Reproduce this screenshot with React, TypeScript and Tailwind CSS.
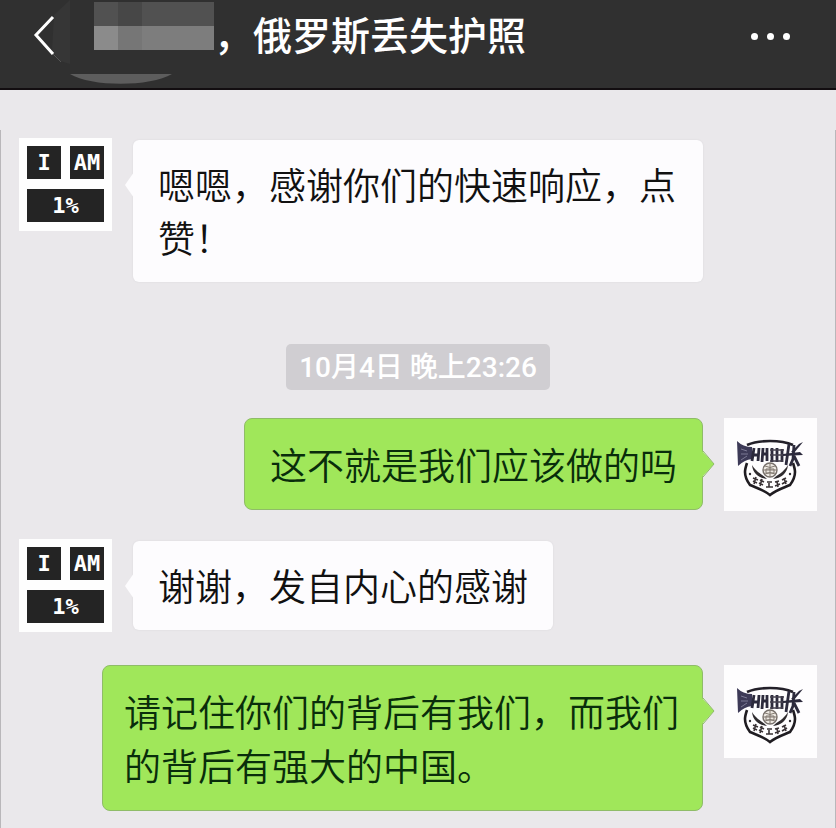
import type { ReactNode } from 'react';

function TileAvatar() {
  return (
    <div
      role="img"
      aria-label="I AM 1%"
      className="grid h-[93px] w-[93px] shrink-0 grid-cols-2 gap-x-[9px] gap-y-[10px] bg-[#fefefe] p-2 pb-[9px] font-['DejaVu_Sans_Mono',monospace] text-[22px] leading-none font-bold text-white"
    >
      <span className="flex items-center justify-center bg-[#242424]">I</span>
      <span className="flex items-center justify-center bg-[#242424]">AM</span>
      <span className="col-span-2 flex items-center justify-center bg-[#242424]">1%</span>
    </div>
  );
}

function BadgeAvatar() {
  return (
    <div className="h-[93px] w-[93px] shrink-0 bg-[#fefdfe]">
      <svg viewBox="0 0 93 93" className="h-full w-full" role="img" aria-label="警徽头像">
        <path d="M23 27Q32 23 46 23Q60 23 69 27" fill="none" stroke="#232029" strokeWidth="2.6" />
        <path d="M23 45C22 48 21 51 21 54C21 58 23 63 26 67C33 70 40 72 46 77C52 72 59 70 66 67C69 63 71 58 71 54C71 51 70 48 69 45" fill="none" stroke="#1f1c21" strokeWidth="2.6" />
        <path d="M13 23Q19 29 28 29L28 41Q20 42 14 48Z" fill="#3d3a57" />
        <path d="M17 31L23 33M17 36H24M17 42L23 38" stroke="#8e8ba5" strokeWidth="0.8" />
        <g fill="none" stroke="#2c2a3c" strokeWidth="2.8">
          <path d="M30 30L28 43M35 30L34 43M30 37H35M39 30L38 44M43 30V43M38 36H43" />
          <path d="M48 30V44M53 30V44M58 31V44" />
          <path d="M65 26L62 47" />
          <path d="M70 27L69 41L66 48M70 38L75 48" />
        </g>
        <path d="M46 32H60M46 37H60M46 43H59" stroke="#45424f" strokeWidth="1.4" />
        <path d="M59 36L76 34L79 37L59 38Z" fill="#2c2a3c" />
        <path d="M79 24L70 35L67 34L75 26Z" fill="#2c2a3c" />
        <path d="M28 47C29 56 35 60 43 61C38 56 33 55 28 47ZM64 47C63 56 57 60 49 61C54 56 59 55 64 47Z" fill="#2f2b2e" />
        <circle cx="46" cy="52" r="7" fill="#eee9e3" stroke="#77706b" strokeWidth="1.4" />
        <path d="M39 52H53M41 48Q46 51 51 48M41 56Q46 53 51 56M46 45V59M42 51H50V55H42Z" fill="none" stroke="#817970" strokeWidth="1" />
        <path d="M29 60L34 62M29 63L33 65M32 59L30 66M36 62L40 64M35 65L39 67M38 61L36 68M43 64H48M42 69H49M45 65V69M51 64L55 63M51 68L56 66M53 63L54 69M58 62L62 60M58 66L63 63M60 60L62 66" stroke="#393235" strokeWidth="1.6" />
        <circle cx="26" cy="56" r="1.2" fill="#302d31" />
        <circle cx="66" cy="56" r="1.2" fill="#302d31" />
      </svg>
    </div>
  );
}

function Received({ children }: { children: ReactNode }) {
  return (
    <div className="flex items-start gap-[21px] pr-[114px]">
      <TileAvatar />
      <div className="relative mt-[2px] rounded-md bg-[#fdfcfe] px-[25px] py-[18px] text-[37px] leading-[53px] font-[350] text-[#111] shadow-[0_0_2px_#d8d6da]">
        <svg viewBox="0 0 10 26" className="absolute top-8 -left-[9px] h-[26px] w-[10px]" aria-hidden="true">
          <path d="M10 0L1 13L10 26Z" fill="#fdfcfe" />
        </svg>
        <p>{children}</p>
      </div>
    </div>
  );
}

function Sent({ children, long = false }: { children: ReactNode; long?: boolean }) {
  return (
    <div className="flex items-start justify-end gap-[21px] pl-[83px]">
      <div
        className={`relative rounded-lg border border-[#8fbc68] bg-[#a0e75a] py-[18px] text-[37px] leading-[54px] font-[350] text-[#092d0b] ${long ? 'px-[21px]' : 'px-[25px]'}`}
      >
        <svg viewBox="0 0 13 28" className="absolute top-[31px] -right-[13px] h-7 w-[13px]" aria-hidden="true">
          <path d="M0 1L12 14L0 27Z" fill="#a0e75a" />
          <path d="M1 1L12 14L1 27" fill="none" stroke="#8fbc68" />
        </svg>
        <p>{children}</p>
      </div>
      <BadgeAvatar />
    </div>
  );
}

function Header() {
  return (
    <header className="flex h-[90px] items-start border-b-2 border-[#120d10] bg-[#303030] text-white">
      <button type="button" aria-label="返回" className="h-[88px] w-[214px] shrink-0">
        <svg viewBox="0 0 214 88" className="h-full w-full" aria-hidden="true">
          <path d="M54 15L70 0V64L60 61L52 51Z" fill="#363636" />
          <path d="M70 74H172C150 87 91 87 70 74Z" fill="#5d5d5d" />
          <path d="M94 2H214V26H94Z" fill="#515151" />
          <path d="M118 2H142V26H118Z" fill="#474747" />
          <path d="M94 26H214V50H94Z" fill="#7d7d7d" />
          <path d="M94 26H118V50H94Z" fill="#8b8b8b" />
          <path d="M118 26H142V50H118Z" fill="#767676" />
          <path d="M53 17L36 35L53 54" fill="none" stroke="#fff" strokeWidth="3" />
          <path d="M53 54L61 62" stroke="#555" strokeWidth="1" />
        </svg>
      </button>
      <h1 className="flex-1 pt-[5px] text-[39px] leading-[56px] font-medium">，俄罗斯丢失护照</h1>
      <button type="button" aria-label="更多" className="mt-3 mr-[46px] flex h-12 items-center gap-[9px]">
        <span className="h-[7px] w-[7px] rounded-full bg-white" />
        <span className="h-[7px] w-[7px] rounded-full bg-white" />
        <span className="h-[7px] w-[7px] rounded-full bg-white" />
      </button>
    </header>
  );
}

export default function App() {
  return (
    <div className="flex min-h-screen flex-col bg-[#eae8eb] font-['Noto_Sans_CJK_SC',sans-serif]">
      <Header />
      <main className="mt-10 flex-1 border-x border-[#b9b7ba] px-[18px] pt-2 pb-[17px]">
        <Received>嗯嗯，感谢你们的快速响应，点赞！</Received>
        <time className="mx-auto mt-[62px] mb-7 block h-[46px] w-fit rounded-[5px] bg-[#d0ced2] px-[13px] font-[Roboto,'Noto_Sans_CJK_SC',sans-serif] text-[28px] leading-[48px] font-medium text-white">
          10月4日 晚上23:26
        </time>
        <Sent>这不就是我们应该做的吗</Sent>
        <div className="mt-7 mb-[33px]">
          <Received>谢谢，发自内心的感谢</Received>
        </div>
        <Sent long>请记住你们的背后有我们，而我们的背后有强大的中国。</Sent>
      </main>
    </div>
  );
}
